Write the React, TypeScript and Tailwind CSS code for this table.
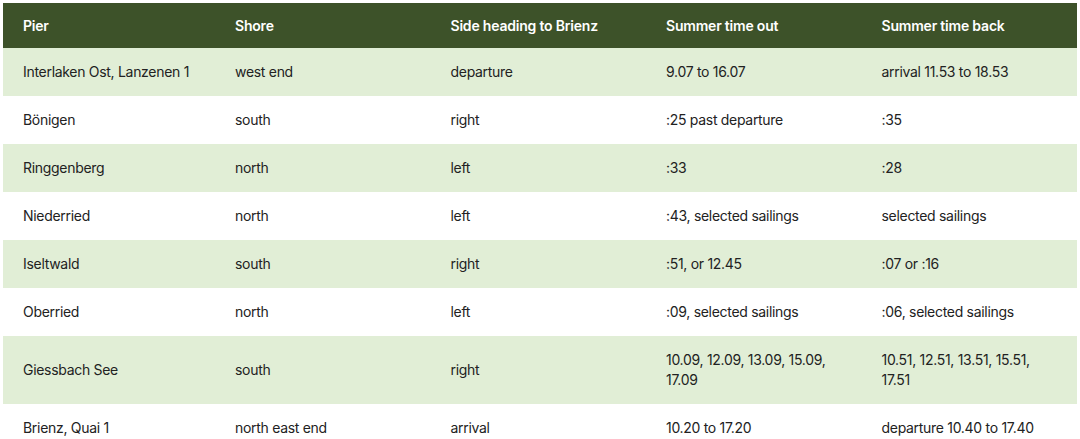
export default function App() {
  const headers = ["Pier", "Shore", "Side heading to Brienz", "Summer time out", "Summer time back"]
  const rows = [
    ["Interlaken Ost, Lanzenen 1", "west end", "departure", "9.07 to 16.07", "arrival 11.53 to 18.53"],
    ["Bönigen", "south", "right", ":25 past departure", ":35"],
    ["Ringgenberg", "north", "left", ":33", ":28"],
    ["Niederried", "north", "left", ":43, selected sailings", "selected sailings"],
    ["Iseltwald", "south", "right", ":51, or 12.45", ":07 or :16"],
    ["Oberried", "north", "left", ":09, selected sailings", ":06, selected sailings"],
    ["Giessbach See", "south", "right", "10.09, 12.09, 13.09, 15.09, 17.09", "10.51, 12.51, 13.51, 15.51, 17.51"],
    ["Brienz, Quai 1", "north east end", "arrival", "10.20 to 17.20", "departure 10.40 to 17.40"],
  ]

  return (
    <main className="min-h-screen bg-white px-[3px] pt-[3px] font-['Inter',sans-serif] text-[14px] text-[#222]">
      <table className="w-full table-fixed border-collapse">
        <colgroup>
          <col className="w-[212px]" />
          <col />
          <col />
          <col />
          <col />
        </colgroup>
        <thead>
          <tr className="bg-[#3d5229] text-white">
            {headers.map((h) => (
              <th key={h} className="h-[45px] px-5 text-left font-semibold tracking-[-0.2px]">
                {h}
              </th>
            ))}
          </tr>
        </thead>
        <tbody>
          {rows.map((row, i) => (
            <tr key={i} className={i % 2 === 0 ? "bg-[#e1eed6]" : "bg-white"}>
              {row.map((cell, j) => (
                <td key={j} className="px-5 py-[14px] align-middle leading-[20px] tracking-[-0.3px]">
                  {cell}
                </td>
              ))}
            </tr>
          ))}
        </tbody>
      </table>
    </main>
  )
}
